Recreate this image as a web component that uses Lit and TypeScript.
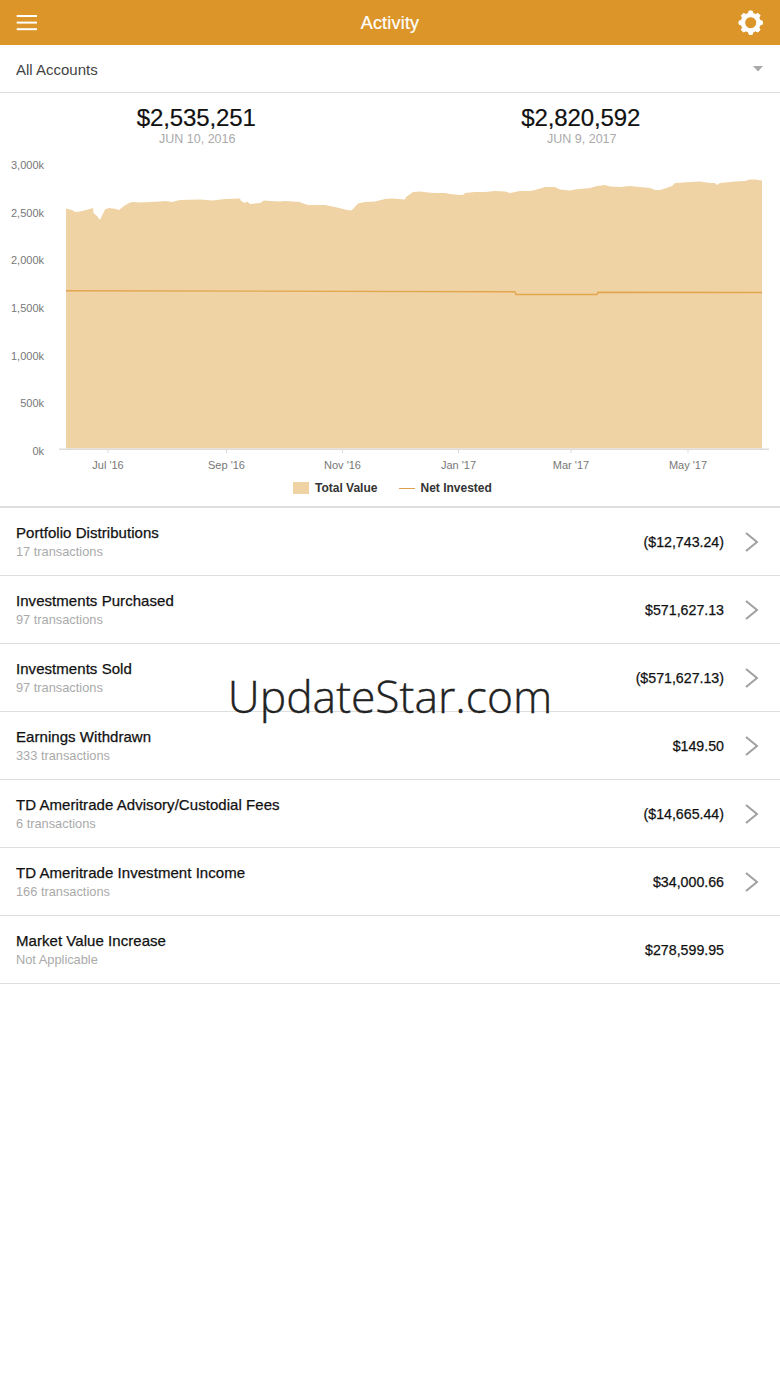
import { LitElement, css, html, svg } from 'lit';
import { customElement } from 'lit/decorators.js';

const ROWS = [
  { title: 'Portfolio Distributions', sub: '17 transactions', amount: '($12,743.24)', more: true },
  { title: 'Investments Purchased', sub: '97 transactions', amount: '$571,627.13', more: true },
  { title: 'Investments Sold', sub: '97 transactions', amount: '($571,627.13)', more: true },
  { title: 'Earnings Withdrawn', sub: '333 transactions', amount: '$149.50', more: true },
  { title: 'TD Ameritrade Advisory/Custodial Fees', sub: '6 transactions', amount: '($14,665.44)', more: true },
  { title: 'TD Ameritrade Investment Income', sub: '166 transactions', amount: '$34,000.66', more: true },
  { title: 'Market Value Increase', sub: 'Not Applicable', amount: '$278,599.95', more: false },
];

// top edge of the area, in page coordinates (svg starts at y=155)
const TOP = [
  [66, 208.5], [72, 210], [75, 212], [80, 211.5], [88, 209.5], [93, 208], [93.5, 213], [97, 216], [100, 220],
  [105, 209.5], [109, 208], [116, 209], [119, 210], [124, 206], [129, 203], [132, 202], [140, 202.5], [160, 201.5],
  [165, 201], [172, 202], [180, 200], [200, 199.5], [212, 200.5], [225, 199], [240, 198.5], [241, 201], [245, 203],
  [247, 201.5], [250, 204], [260, 203], [264, 200.5], [270, 201], [280, 201.5], [285, 201], [300, 202], [302, 203],
  [308, 205], [325, 205], [335, 207], [345, 209.5], [351, 210.5], [353, 209], [358, 203.5], [365, 202], [375, 201.5],
  [385, 199], [392, 198.5], [405, 199.5], [406, 197], [413, 192], [420, 191.5], [428, 192.5], [435, 193], [445, 193],
  [450, 194], [460, 195], [463, 195], [465, 193], [475, 192], [485, 192], [495, 191], [505, 191.5], [510, 193],
  [520, 191], [530, 191], [535, 190], [545, 187], [555, 187], [560, 189.5], [570, 190.5], [575, 189.5], [590, 188],
  [597, 186], [605, 185], [610, 186.5], [620, 187], [630, 186], [640, 187], [650, 188], [655, 190], [660, 190],
  [665, 188.5], [672, 186], [675, 183], [690, 182], [700, 181.5], [710, 183], [715, 183], [717, 185], [720, 183],
  [735, 181.5], [745, 181], [750, 179.5], [755, 179.5], [762, 180.5],
];
const BASE = 448.5;
const OFFSET = 155;
const CHART_HEIGHT = 320;
const areaPath =
  `M66 ${BASE - OFFSET} ` + TOP.map(([x, y]) => `L${x} ${y - OFFSET}`).join(' ') + ` L762 ${BASE - OFFSET} Z`;

const Y_LABELS = ['3,000k', '2,500k', '2,000k', '1,500k', '1,000k', '500k', '0k'];
const X_LABELS: [number, string][] = [
  [107.5, "Jul '16"], [226, "Sep '16"], [342, "Nov '16"], [458, "Jan '17"], [570.5, "Mar '17"], [687.5, "May '17"],
];

function gearPath(cx: number, cy: number, outer: number, inner: number, teeth: number) {
  const pts: string[] = [];
  const step = (2 * Math.PI) / teeth;
  for (let i = 0; i < teeth; i++) {
    const a = i * step - Math.PI / 2;
    const list: [number, number][] = [
      [a - step * 0.31, inner],
      [a - step * 0.17, outer],
      [a + step * 0.17, outer],
      [a + step * 0.31, inner],
    ];
    for (const [t, r] of list) pts.push(`${(cx + r * Math.cos(t)).toFixed(2)} ${(cy + r * Math.sin(t)).toFixed(2)}`);
  }
  return 'M' + pts.join('L') + 'Z';
}

@customElement('app-root')
export class AppRoot extends LitElement {
  static styles = css`
    :host {
      display: block;
      position: relative;
      min-height: 1387px;
      background: #fff;
      font-family: 'Liberation Sans', Arial, sans-serif;
    }

    .top-bar {
      display: flex;
      align-items: center;
      justify-content: space-between;
      height: 45px;
      padding: 0 16px;
      background: #db9528;
      color: #fff;
    }

    .top-bar svg {
      display: block;
    }

    .menu-icon {
      margin-right: 4px;
    }

    .top-title {
      margin-top: 2px;
      font-size: 18px;
      letter-spacing: 0.2px;
      -webkit-text-stroke: 0.2px #fff;
    }

    .picker {
      display: flex;
      align-items: center;
      justify-content: space-between;
      box-sizing: border-box;
      height: 48px;
      padding: 2px 16px 0;
      border-bottom: 1px solid #dedede;
      font-size: 15px;
      color: #444;
    }

    .caret {
      margin: -2px 1px 0 0;
    }

    .stats {
      display: flex;
      padding: 0 7px 0 4px;
      height: 62px;
    }

    .stat {
      flex: 1;
      text-align: center;
      padding-top: 12px;
    }

    .stat-value {
      font-size: 24px;
      line-height: 26px;
      letter-spacing: -0.1px;
      color: #111;
      -webkit-text-stroke: 0.2px #111;
    }

    .stat-date {
      margin-top: 1px;
      padding-left: 2px;
      font-size: 12.5px;
      line-height: 14px;
      color: #aaa;
    }

    .chart {
      display: block;
    }

    .chart text {
      font-family: 'Liberation Sans', Arial, sans-serif;
      font-size: 11px;
      fill: #777;
    }

    .legend {
      display: flex;
      align-items: center;
      height: 26px;
      padding: 0 0 5px 293px;
      border-bottom: 2px solid #dedede;
      font-size: 12px;
      font-weight: 700;
      color: #333;
    }

    .swatch {
      width: 16px;
      height: 12px;
      margin-right: 6px;
      background: #efd3a5;
    }

    .dash {
      width: 16px;
      height: 1px;
      margin: 0 5px 0 22px;
      background: #dfa24a;
    }

    .row {
      display: flex;
      align-items: center;
      height: 67px;
      padding: 0 22px 0 16px;
      border-bottom: 1px solid #dedede;
    }

    .row-text {
      flex: 1;
    }

    .row-title {
      font-size: 15px;
      line-height: 19px;
      letter-spacing: 0.05px;
      color: #111;
      -webkit-text-stroke: 0.25px #111;
    }

    .row-sub {
      font-size: 12.8px;
      line-height: 19px;
      color: #aaa;
    }

    .row-amount {
      font-size: 14.2px;
      color: #111;
      -webkit-text-stroke: 0.25px #111;
    }

    .row-chevron {
      display: block;
      width: 13px;
      height: 20px;
      margin-left: 21px;
    }

    .watermark {
      position: absolute;
      left: 0;
      right: 0;
      top: 664px;
      text-align: center;
      font-family: 'Open Sans', sans-serif;
      font-weight: 300;
      font-size: 44.4px;
      line-height: 64px;
      color: #222;
      -webkit-text-stroke: 0.4px #222;
    }
  `;

  private renderChart() {
    const ticks = X_LABELS.map(([x]) => x);
    return html`<svg class="chart" width="780" height="${CHART_HEIGHT}" viewBox="0 0 780 ${CHART_HEIGHT}">
      <path d="${areaPath}" fill="#efd3a5"></path>
      <path
        d="M66 ${290.7 - OFFSET} L515 ${291.8 - OFFSET} L516 ${294.5 - OFFSET} L597 ${294.5 - OFFSET} L598 ${292.3 - OFFSET} L762 ${292.5 - OFFSET}"
        fill="none"
        stroke="#e2a64f"
        stroke-width="1.4"
      ></path>
      <rect x="59" y="${448.5 - OFFSET}" width="710" height="1.5" fill="#dcdcdc"></rect>
      ${ticks.map((x) => svg`<rect x="${x}" y="${449 - OFFSET}" width="1" height="4" fill="#dcdcdc"></rect>`)}
      ${Y_LABELS.map(
        (label, i) => svg`<text x="44" y="${169 + i * 47.65 - OFFSET}" text-anchor="end">${label}</text>`
      )}
      ${X_LABELS.map(
        ([x, label]) => svg`<text x="${x + 0.5}" y="${469 - OFFSET}" text-anchor="middle">${label}</text>`
      )}
    </svg>`;
  }

  render() {
    return html`
      <div class="top-bar">
        <svg class="menu-icon" width="22" height="18" viewBox="0 0 22 18">
          <rect x="0.7" y="1" width="20.3" height="2" fill="#fff"></rect>
          <rect x="0.7" y="7.6" width="20.3" height="2" fill="#fff"></rect>
          <rect x="0.7" y="14.2" width="20.3" height="2" fill="#fff"></rect>
        </svg>
        <div class="top-title">Activity</div>
        <svg width="26" height="26" viewBox="0 0 26 26">
          <path
            fill="#fff"
            stroke="#fff"
            stroke-width="1"
            stroke-linejoin="round"
            fill-rule="evenodd"
            d="${gearPath(12.7, 12.7, 11.8, 9.6, 8)} M12.7 6.7a6 6 0 1 0 0 12a6 6 0 1 0 0-12Z"
          ></path>
        </svg>
      </div>

      <div class="picker">
        <span>All Accounts</span>
        <svg class="caret" width="10" height="6" viewBox="0 0 10 6">
          <path d="M0 0H10L5 5.5Z" fill="#a9a9a9"></path>
        </svg>
      </div>

      <div class="stats">
        <div class="stat">
          <div class="stat-value">$2,535,251</div>
          <div class="stat-date">JUN 10, 2016</div>
        </div>
        <div class="stat">
          <div class="stat-value">$2,820,592</div>
          <div class="stat-date">JUN 9, 2017</div>
        </div>
      </div>

      ${this.renderChart()}

      <div class="legend">
        <span class="swatch"></span>
        <span>Total Value</span>
        <span class="dash"></span>
        <span>Net Invested</span>
      </div>

      ${ROWS.map(
        (row) => html`<div class="row">
          <div class="row-text">
            <div class="row-title">${row.title}</div>
            <div class="row-sub">${row.sub}</div>
          </div>
          <div class="row-amount">${row.amount}</div>
          ${row.more
            ? html`<svg class="row-chevron" viewBox="0 0 13 20">
                <path d="M1 1L12 10L1 19" fill="none" stroke="#a0a0a0" stroke-width="2"></path>
              </svg>`
            : html`<div class="row-chevron"></div>`}
        </div>`
      )}

      <div class="watermark">UpdateStar.com</div>
    `;
  }
}
